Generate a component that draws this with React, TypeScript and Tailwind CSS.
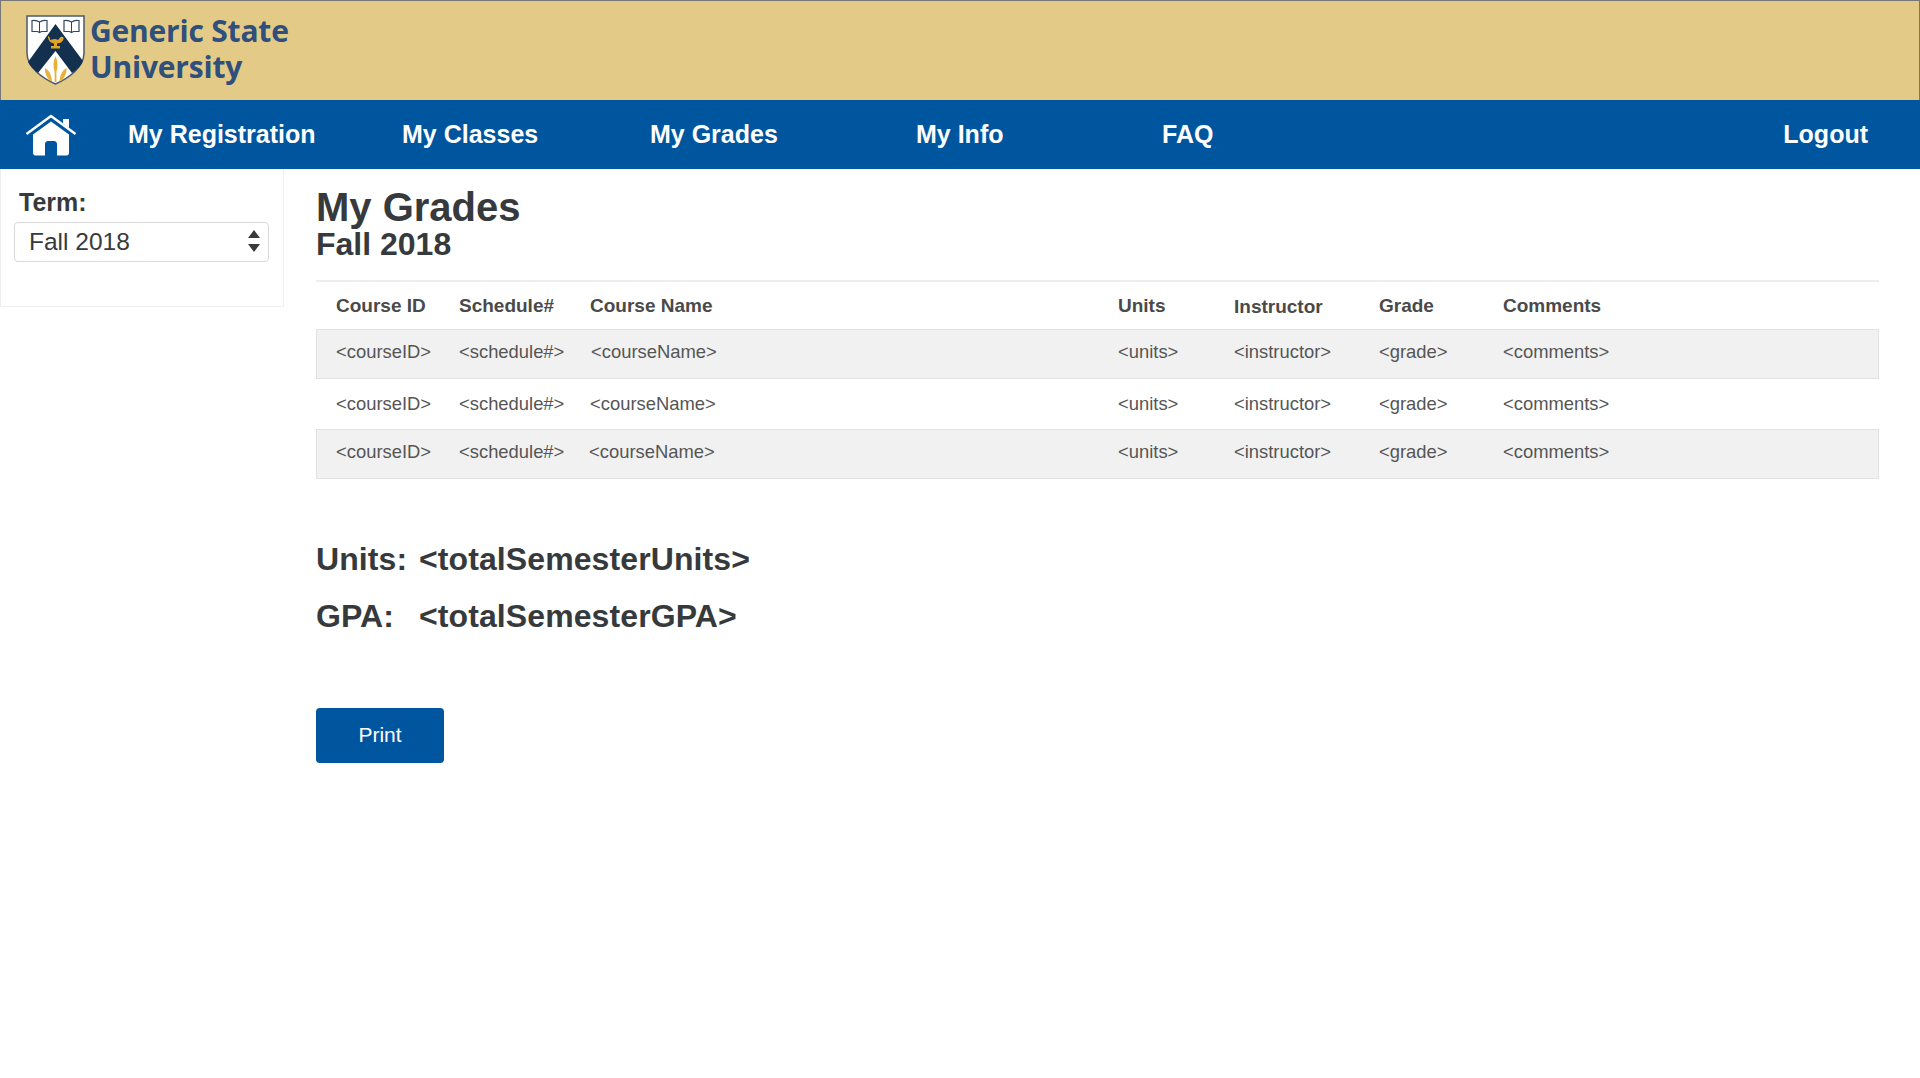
import React from "react";

const FONT = "font-['Liberation_Sans',Arial,sans-serif]";

const navItems = [
  { label: "My Registration", width: "w-[274px]" },
  { label: "My Classes", width: "w-[248px]" },
  { label: "My Grades", width: "w-[266px]" },
  { label: "My Info", width: "w-[246px]" },
  { label: "FAQ", width: "w-[100px]" },
];

const rows = [0, 1, 2];

const nameOffsets = ["ml-[1px]", "", "ml-[-1px]"];

function Crest() {
  return (
    <svg width="60" height="70" viewBox="0 0 60 70" className="shrink-0">
      <path d="M1 1H58V38C58 52 43 63 29.5 69C16 63 1 52 1 38Z" fill="#fff" stroke="#4c5a6b" strokeWidth="1.5" />
      {/* chevron */}
      <path d="M29.5 9L57 46C55 51 51 55 46 58L29.5 36L12 58C8 55 4 51 2 47Z" fill="#14304f" />
      {/* books */}
      <path d="M6 5.5C9 5 11.5 5.5 13.5 7C15.5 5.5 18 5 21 5.5V16.5H15.5L13.5 17.5L11.5 16.5H6Z" fill="#fff" stroke="#33475e" strokeWidth="1.2" />
      <path d="M13.5 7V17" stroke="#33475e" strokeWidth="1" />
      <path d="M38 5.5C41 5 43.5 5.5 45.5 7C47.5 5.5 50 5 53 5.5V16.5H47.5L45.5 17.5L43.5 16.5H38Z" fill="#fff" stroke="#33475e" strokeWidth="1.2" />
      <path d="M45.5 7V17" stroke="#33475e" strokeWidth="1" />
      {/* lamp */}
      <path d="M22 21C22 26 25 28 28 28.5V31H25V33.5H34V31H31V28.5C35 28 36.5 27 37.5 24C38.5 23 36.5 21 34.5 22L32 25C28.5 23 26 25 24 25C24 23 24 22 22 21Z" fill="#e0a528" />
      {/* wheat */}
      <path d="M29.5 41C32 46 32 52 30.4 57V67H28.6V57C27 52 27 46 29.5 41Z" fill="#e8b23a" />
      <path d="M19 53C23 55 25.5 60 26 66L24.5 66C21 63 18.5 58 19 53Z" fill="#e8b23a" />
      <path d="M40.5 53C36.5 55 34 60 33.5 66L35 66C38.5 63 41 58 40.5 53Z" fill="#e8b23a" />
    </svg>
  );
}

function HomeIcon() {
  return (
    <svg width="52" height="42" viewBox="0 0 52 42" className="shrink-0">
      <path d="M1.5 20L26 2L50.5 20" fill="none" stroke="#fff" strokeWidth="2.4" strokeLinejoin="round" />
      <path d="M38 5H44V14L38 9.5Z" fill="#fff" />
      <path d="M26 7.5L44 20.5V39C44 40.5 43 41.5 41.5 41.5H32V30C32 28 30.5 27 29 27H23C21.5 27 20 28 20 30V41.5H10.5C9 41.5 8 40.5 8 39V20.5Z" fill="#fff" />
    </svg>
  );
}

function GradeRow({ shaded, nameClass }: { shaded: boolean; nameClass: string }) {
  return (
    <div
      className={`grid h-[50px] grid-cols-[123px_131px_528px_116px_145px_124px_1fr] items-center text-[18.4px] text-[#555] ${
        shaded ? "border border-[#e2e2e2] bg-[#f1f1f1] pb-[4px] pl-[19px]" : "pl-[20px]"
      }`}
    >
      <span>&lt;courseID&gt;</span>
      <span>&lt;schedule#&gt;</span>
      <span className={nameClass}>&lt;courseName&gt;</span>
      <span>&lt;units&gt;</span>
      <span>&lt;instructor&gt;</span>
      <span>&lt;grade&gt;</span>
      <span>&lt;comments&gt;</span>
    </div>
  );
}

export default function App() {
  return (
    <div className={`min-h-[1078px] bg-white text-[#373a3c] ${FONT}`}>
      {/* Banner */}
      <header className="flex h-[100px] items-start border border-b-0 border-[#777] bg-[#e4ca87] pl-[25px] pt-[14px]">
        <Crest />
        <div className="ml-[4px] mt-[-2px] font-['Open_Sans',sans-serif] text-[30px] font-bold leading-[36px] tracking-[-0.2px] text-[#2f4f7c]">
          Generic State
          <br />
          University
        </div>
      </header>

      {/* Nav */}
      <nav className="flex h-[69px] items-center bg-[#00559f] pt-[1px] text-[25px] font-bold text-white">
        <div className="ml-[25px] mr-[51px]">
          <HomeIcon />
        </div>
        {navItems.map((item) => (
          <a key={item.label} className={item.width}>
            {item.label}
          </a>
        ))}
        <a className="ml-auto mr-[52px]">Logout</a>
      </nav>

      <div className="flex items-start">
        {/* Sidebar */}
        <aside className="h-[138px] w-[284px] shrink-0 border-b border-r border-l border-[#eceeef] pl-[13px] pr-[14px] pt-[19px]">
          <label className="ml-[5px] block text-[25px] font-bold leading-[28px]">Term:</label>
          <div className="relative mt-[6px]">
            <select className="h-[40px] w-full appearance-none rounded-[4px] border border-[#d9d9d9] bg-white pl-[14px] text-[24.5px] text-[#373a3c]">
              <option>Fall 2018</option>
            </select>
            <svg
              width="12"
              height="24"
              viewBox="0 0 12 24"
              className="pointer-events-none absolute right-[9px] top-[7px]"
            >
              <path d="M6 1L12 9H0Z M0 15H12L6 23Z" fill="#373a3c" />
            </svg>
          </div>
        </aside>

        {/* Main */}
        <main className="ml-[32px] mr-[41px] flex-1">
          <h1 className="mt-[16px] text-[40px] font-bold leading-[44px]">My Grades</h1>
          <h3 className="mt-[-2px] text-[32px] font-bold leading-[34px]">Fall 2018</h3>
          <div className="mt-[19px] border-t-2 border-[#eee]">
            <div className="grid h-[47px] grid-cols-[123px_131px_528px_116px_145px_124px_1fr] items-center pl-[20px] pt-[2px] text-[19px] font-bold text-[#4a4a4a]">
              <span>Course ID</span>
              <span>Schedule#</span>
              <span>Course Name</span>
              <span>Units</span>
              <span className="mt-[2px]">Instructor</span>
              <span>Grade</span>
              <span>Comments</span>
            </div>
            {rows.map((r) => (
              <GradeRow key={r} shaded={r !== 1} nameClass={nameOffsets[r]} />
            ))}
          </div>

          <div className="mt-[62px] grid grid-cols-[103px_1fr] gap-y-[21px] text-[32px] font-bold leading-[36px] tracking-[0.1px]">
            <span>Units:</span>
            <span>&lt;totalSemesterUnits&gt;</span>
            <span>GPA:</span>
            <span>&lt;totalSemesterGPA&gt;</span>
          </div>

          <button className="mt-[74px] h-[55px] w-[128px] rounded-[4px] bg-[#00559f] pb-[2px] text-[21px] text-white">
            Print
          </button>
        </main>
      </div>
    </div>
  );
}
